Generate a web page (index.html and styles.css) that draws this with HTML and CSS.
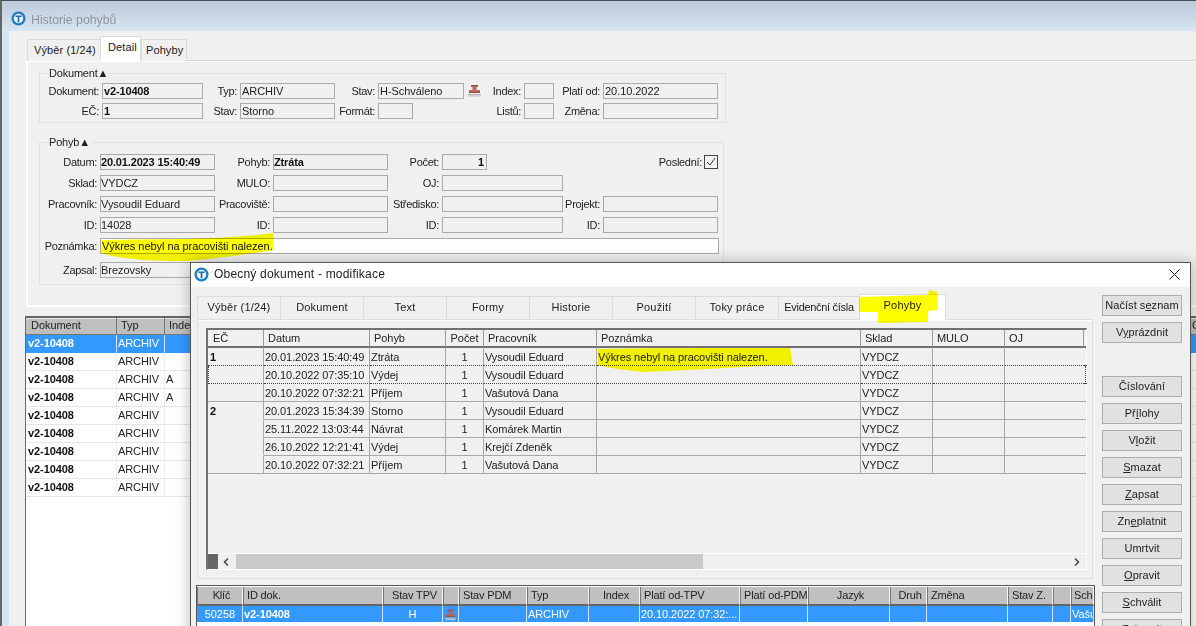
FILE: index.html
```html
<!DOCTYPE html>
<html lang="cs">
<head>
<meta charset="utf-8">
<title>Historie pohybů</title>
<link rel="stylesheet" href="styles.css">
</head>
<body>
<svg class="defs" width="0" height="0" aria-hidden="true">
  <symbol id="logo" viewBox="0 0 16 16">
    <circle cx="8" cy="8" r="7.500" fill="#1c7fc6"/>
    <circle cx="8" cy="8" r="5" fill="#eef5fb"/>
    <path d="M4.800 4.800h6.400v1.700H8.900V12H7.100V6.500H4.800z" fill="#1a6fb0"/>
  </symbol>
  <symbol id="stamp" viewBox="0 0 15 15">
    <path d="M4 2h7v2h-1.500v3H13v3H2V7h3.500V4H4z" fill="#b8675c"/>
    <path d="M4 2h7v1H4zM2 9h11v1H2z" fill="#8d4a40"/>
    <path d="M1 11h13v1.500H1z" fill="#b5b5b5"/>
    <path d="M2 13h11v1H2z" fill="#d8d8d8"/>
  </symbol>
</svg>

<main class="desktop">

  <section class="window history">
    <header class="history-title">
      <svg class="logo"><use href="#logo"/></svg>
      <span class="history-name">Historie pohybů</span>
    </header>
    <div class="history-body">
      <nav class="tabs">
        <span class="tab">Výběr (1/24)</span>
        <span class="tab tab-on">Detail</span>
        <span class="tab tab-last">Pohyby</span>
      </nav>
      <div class="pane">
        <section class="group group-doc">
          <h3 class="legend">Dokument▲</h3>
          <div class="form form-doc">
            <label>Dokument:</label><output class="strong">v2-10408</output>
            <label>Typ:</label><output>ARCHIV</output>
            <label>Stav:</label><output>H-Schváleno</output>
            <label class="with-icon"><svg class="stamp"><use href="#stamp"/></svg><span>Index:</span></label><output></output>
            <label>Platí od:</label><output>20.10.2022</output>

            <label>EČ:</label><output class="strong">1</output>
            <label>Stav:</label><output>Storno</output>
            <label>Formát:</label><output class="w35"></output>
            <label>Listů:</label><output></output>
            <label>Změna:</label><output></output>
          </div>
        </section>

        <section class="group group-move">
          <h3 class="legend">Pohyb▲</h3>
          <div class="form form-move">
            <label>Datum:</label><output class="strong">20.01.2023 15:40:49</output>
            <label>Pohyb:</label><output class="strong">Ztráta</output>
            <label>Počet:</label><output class="strong num w45">1</output>
            <label class="last-flag">Poslední:<svg class="check" viewBox="0 0 14 14"><rect x=".5" y=".5" width="13" height="13" fill="#f4f4f4" stroke="#444"/><path d="M3 7l3 3 5-7" fill="none" stroke="#333"/></svg></label>

            <label>Sklad:</label><output>VYDCZ</output>
            <label>MULO:</label><output></output>
            <label>OJ:</label><output></output>
            <span class="skip"></span>

            <label>Pracovník:</label><output>Vysoudil Eduard</output>
            <label>Pracoviště:</label><output></output>
            <label>Středisko:</label><output></output>
            <label>Projekt:</label><output></output>

            <label>ID:</label><output>14028</output>
            <label>ID:</label><output></output>
            <label>ID:</label><output></output>
            <label>ID:</label><output></output>

            <label>Poznámka:</label><output class="note">Výkres nebyl na pracovišti nalezen.</output>

            <label class="after-note">Zapsal:</label><output class="after-note">Brezovsky</output>
          </div>
        </section>
      </div>

      <div class="list">
        <table class="grid grid-history">
          <colgroup><col class="h1"><col class="h2"><col class="h3"><col class="h4"><col class="h5"></colgroup>
          <thead><tr><th>Dokument</th><th>Typ</th><th>Index</th><th></th><th>C</th></tr></thead>
          <tbody>
            <tr class="sel"><td class="b">v2-10408</td><td>ARCHIV</td><td></td><td></td><td></td></tr>
            <tr><td class="b">v2-10408</td><td>ARCHIV</td><td></td><td></td><td></td></tr>
            <tr><td class="b">v2-10408</td><td>ARCHIV</td><td>A</td><td></td><td></td></tr>
            <tr><td class="b">v2-10408</td><td>ARCHIV</td><td>A</td><td></td><td></td></tr>
            <tr><td class="b">v2-10408</td><td>ARCHIV</td><td></td><td></td><td></td></tr>
            <tr><td class="b">v2-10408</td><td>ARCHIV</td><td></td><td></td><td></td></tr>
            <tr><td class="b">v2-10408</td><td>ARCHIV</td><td></td><td></td><td></td></tr>
            <tr><td class="b">v2-10408</td><td>ARCHIV</td><td></td><td></td><td></td></tr>
            <tr><td class="b">v2-10408</td><td>ARCHIV</td><td></td><td></td><td></td></tr>
          </tbody>
        </table>
      </div>
    </div>
  </section>

  <svg class="marker marker-a" viewBox="0 0 176 30"><path d="M1 8C60 7 120 8 173 1L174 18C150 22 120 26 87 29C50 30 15 26 1 21Z"/></svg>

  <section class="window dialog">
    <header class="dialog-title">
      <svg class="logo"><use href="#logo"/></svg>
      <span class="dialog-name">Obecný dokument - modifikace</span>
      <svg class="close" viewBox="0 0 11 11"><path d="M.5.5l10 10M10.500.5l-10 10" fill="none" stroke="#222"/></svg>
    </header>
    <div class="dialog-body">
      <div class="dialog-main">
        <nav class="tabs tabs-wide">
          <span class="tab">Výběr (1/24)</span>
          <span class="tab">Dokument</span>
          <span class="tab">Text</span>
          <span class="tab">Formy</span>
          <span class="tab">Historie</span>
          <span class="tab">Použití</span>
          <span class="tab">Toky práce</span>
          <span class="tab tab-narrow">Evidenční čísla</span>
          <span class="tab tab-on">Pohyby</span>
        </nav>
        <div class="pane-wide">
          <div class="moves">
            <table class="grid grid-moves">
              <colgroup><col class="m1"><col class="m2"><col class="m3"><col class="m4"><col class="m5"><col class="m6"><col class="m7"><col class="m8"><col class="m9"><col class="m10"></colgroup>
              <thead><tr><th>EČ</th><th>Datum</th><th>Pohyb</th><th class="ctr">Počet</th><th>Pracovník</th><th>Poznámka</th><th>Sklad</th><th>MULO</th><th>OJ</th><th></th></tr></thead>
              <tbody>
                <tr><td class="b noline">1</td><td>20.01.2023 15:40:49</td><td>Ztráta</td><td class="ctr">1</td><td>Vysoudil Eduard</td><td>Výkres nebyl na pracovišti nalezen.</td><td>VYDCZ</td><td></td><td></td><td></td></tr>
                <tr class="focus"><td class="noline"></td><td>20.10.2022 07:35:10</td><td>Výdej</td><td class="ctr">1</td><td>Vysoudil Eduard</td><td></td><td>VYDCZ</td><td></td><td></td><td></td></tr>
                <tr><td></td><td>20.10.2022 07:32:21</td><td>Příjem</td><td class="ctr">1</td><td>Vašutová Dana</td><td></td><td>VYDCZ</td><td></td><td></td><td></td></tr>
                <tr><td class="b noline">2</td><td>20.01.2023 15:34:39</td><td>Storno</td><td class="ctr">1</td><td>Vysoudil Eduard</td><td></td><td>VYDCZ</td><td></td><td></td><td></td></tr>
                <tr><td class="noline"></td><td>25.11.2022 13:03:44</td><td>Návrat</td><td class="ctr">1</td><td>Komárek Martin</td><td></td><td>VYDCZ</td><td></td><td></td><td></td></tr>
                <tr><td class="noline"></td><td>26.10.2022 12:21:41</td><td>Výdej</td><td class="ctr">1</td><td>Krejčí Zdeněk</td><td></td><td>VYDCZ</td><td></td><td></td><td></td></tr>
                <tr><td></td><td>20.10.2022 07:32:21</td><td>Příjem</td><td class="ctr">1</td><td>Vašutová Dana</td><td></td><td>VYDCZ</td><td></td><td></td><td></td></tr>
              </tbody>
            </table>
            <div class="hscroll">
              <span class="corner"></span>
              <svg class="arrow" viewBox="0 0 6 8"><path d="M5 .5L1.500 4 5 7.500" fill="none" stroke="#444" stroke-width="1.500"/></svg>
              <span class="thumb"></span>
              <svg class="arrow arrow-r" viewBox="0 0 6 8"><path d="M1 .5L4.500 4 1 7.500" fill="none" stroke="#444" stroke-width="1.500"/></svg>
            </div>
          </div>
        </div>
        <div class="docs">
          <table class="grid grid-docs">
            <colgroup><col class="d1"><col class="d2"><col class="d3"><col class="d4"><col class="d5"><col class="d6"><col class="d7"><col class="d8"><col class="d9"><col class="d10"><col class="d11"><col class="d12"><col class="d13"><col class="d14"><col class="d15"></colgroup>
            <thead><tr><th class="ctr">Klíč</th><th>ID dok.</th><th class="ctr">Stav TPV</th><th></th><th>Stav PDM</th><th>Typ</th><th class="ctr">Index</th><th>Platí od-TPV</th><th>Platí od-PDM</th><th class="ctr">Jazyk</th><th class="ctr">Druh</th><th>Změna</th><th>Stav Z.</th><th></th><th>Sch</th></tr></thead>
            <tbody>
              <tr class="sel"><td class="rgt">50258</td><td class="b">v2-10408</td><td class="ctr">H</td><td class="ctr"><svg class="stamp"><use href="#stamp"/></svg></td><td></td><td>ARCHIV</td><td></td><td>20.10.2022 07:32:...</td><td></td><td></td><td></td><td></td><td></td><td></td><td>Vašu</td></tr>
            </tbody>
          </table>
        </div>
      </div>
      <aside class="actions">
        <button>Načíst s<u>e</u>znam</button>
        <button>V<u>y</u>prázdnit</button>
        <button class="gap">Číslování</button>
        <button>Př<u>í</u>lohy</button>
        <button>V<u>l</u>ožit</button>
        <button><u>S</u>mazat</button>
        <button><u>Z</u>apsat</button>
        <button>Zn<u>e</u>platnit</button>
        <button>Umrtvit</button>
        <button><u>O</u>pravit</button>
        <button><u>S</u>chválit</button>
        <button><u>Z</u>obrazit</button>
      </aside>
    </div>
  </section>

  <svg class="marker marker-b" viewBox="0 0 197 25"><path d="M1 1C50 0 130 0 193 0L196 17C150 18 100 22 45 24C30 22 10 20 1 17Z"/></svg>
  <svg class="marker marker-c" viewBox="0 0 84 34"><path d="M1 7L70 5L71 0L79 2L79 20L70 21L70 32L20 33L20 22L1 22Z"/></svg>
</main>
</body>
</html>
```

FILE: styles.css
```css
* { box-sizing: border-box; }
html, body { margin: 0; padding: 0; }
body {
  width: 1196px;
  height: 626px;
  overflow: hidden;
  font: 11px/1 "Liberation Sans", Arial, sans-serif;
  color: #222;
  background: #f0f0f0;
}
.defs { position: absolute; }
.desktop { position: relative; width: 1196px; height: 626px; overflow: hidden; }
.window { position: absolute; }

/* background window */
.history {
  left: 0; top: 0; width: 1196px; height: 626px;
  border-top: 1px solid #4a5058;
  border-left: 2px solid #666;
  background: #d8e5f1;
}
.history-title {
  height: 30px;
  padding: 10px 0 0 9px;
  display: flex;
  align-items: flex-start;
  gap: 5px;
  font-size: 12.3px;
  color: #8f959b;
  background: linear-gradient(#bccbdb, #d8e5f1);
}
.history-name { margin-top: 3px; }
.logo { width: 15px; height: 15px; flex: none; }
.history-body {
  margin-left: 7px;
  height: 595px;
  background: #f0f0f0;
  padding-top: 5px;
}
.tabs { display: flex; align-items: flex-end; height: 25px; margin-bottom: -1px; padding-left: 18px; position: relative; z-index: 1; }
.tab {
  height: 22px;
  padding: 5px 5px 0;
  border: 1px solid #dcdcdc;
  border-bottom: 0;
  border-right: 0;
  background: #f0f0f0;
  letter-spacing: .1px;
  white-space: nowrap;
}
.tab-on {
  height: 25px;
  padding-top: 5px;
  background: #fff;
  border-right: 1px solid #dcdcdc;
}
.tab-last { border-right: 1px solid #dcdcdc; }
.history .tab:nth-child(1) { width: 73px; padding-left: 6px; }
.history .tab:nth-child(2) { width: 41px; padding-left: 7px; }
.history .tab:nth-child(3) { width: 46px; padding-left: 4px; }
.pane {
  margin-left: 17px;
  height: 247px;
  border-top: 1px solid #d8d8d8;
  border-left: 2px solid #fff;
  border-bottom: 2px solid #fff;
  box-shadow: inset 0 1px 0 #fff;
  padding: 12px 0 0 11px;
}
.group {
  border: 1px solid #e0e0e0;
  position: relative;
}
.legend {
  margin: -7px 0 0 7px;
  padding: 0 2px;
  width: fit-content;
  height: 13px;
  font: inherit;
  line-height: 13px;
  background: #f0f0f0;
  letter-spacing: -.2px;
}
.group-doc { width: 687px; height: 50px; }
.group-move { width: 685px; height: 143px; margin-top: 19px; }
.form { display: grid; align-items: start; }
.form label {
  height: 16px;
  line-height: 16px;
  text-align: right;
  padding-right: 3px;
  white-space: nowrap;
  letter-spacing: -.3px;
}
.form output {
  height: 16px;
  line-height: 14px;
  padding-left: 1px;
  border: 1px solid #aaa;
  white-space: nowrap;
  overflow: hidden;
  letter-spacing: -.05px;
}
.form-doc {
  grid-template-columns: 62px 101px 37px 95px 43px 86px 60px 30px 49px 115px;
  grid-auto-rows: 16px;
  row-gap: 4px;
  margin-top: 3px;
}
.form-move {
  grid-template-columns: 60px 115px 58px 115px 54px 121px 40px 115px;
  grid-auto-rows: 16px;
  row-gap: 5px;
  margin-top: 5px;
}
.form-move output { padding-left: 0; }
.form .strong { font-weight: 700; color: #111; letter-spacing: -.15px; }
.form .num { text-align: right; padding-right: 2px; }
.w35 { width: 35px; }
.w45 { width: 45px; }
.form .with-icon { display: flex; justify-content: space-between; padding-left: 3px; }
.stamp { width: 15px; height: 15px; display: block; }
.form .last-flag {
  grid-column: span 2;
  display: flex;
  justify-content: flex-end;
  align-items: center;
  gap: 2px;
  padding-right: 0;
}
.check { width: 14px; height: 14px; flex: none; }
.skip { grid-column: span 2; }
.form .note { grid-column: 2 / -1; width: 619px; background: #fff; color: #111; padding-left: 1px; }
.form .after-note { margin-top: 3px; }

/* grids */
.grid { border-collapse: separate; border-spacing: 0; table-layout: fixed; }
.grid th {
  font-weight: 400;
  text-align: left;
  padding: 0 4px;
  overflow: hidden;
  white-space: nowrap;
  letter-spacing: -.05px;
}
.grid td {
  padding: 0 1px;
  overflow: hidden;
  white-space: nowrap;
  letter-spacing: -.08px;
}
.grid .b { font-weight: 700; color: #111; }
.grid .ctr { text-align: center; }
.grid .rgt { text-align: right; padding-right: 7px; }

.list {
  margin: 9px 0 0 16px;
  border-top: 2px solid #666;
  border-left: 1px solid #666;
  height: 312px;
  background: #fff;
  overflow: hidden;
}
.grid-history { width: 1180px; }
.h1 { width: 91px; }
.h2 { width: 48px; }
.h3 { width: 40px; }
.h4 { width: 985px; }
.h5 { width: 16px; }
.grid-history th {
  height: 17px;
  padding-bottom: 2px;
  background: #bfbfbf;
  border-right: 1px solid #777;
  border-bottom: 1px solid #777;
  box-shadow: inset 0 1px 0 #e6e6e6;
}
.grid-history th:first-child { padding-left: 5px; }
.grid-history th:last-child { padding-left: 2px; }
.grid-history td {
  height: 18px;
  border-right: 1px solid #efefef;
  border-bottom: 1px solid #e6e6e6;
}
.grid-history td:first-child { padding-left: 2px; }
.grid .sel td { background: #3399ff; color: #fff; border-right-color: #cfe6ff; border-bottom-color: #3399ff; }

/* marker strokes */
.marker {
  position: absolute;
  fill: #ffff00;
  mix-blend-mode: multiply;
  pointer-events: none;
}
.marker-a { left: 100px; top: 232px; width: 176px; height: 30px; }
.marker-b { left: 597px; top: 348px; width: 197px; height: 25px; z-index: 3; }
.marker-c { left: 858px; top: 290px; width: 84px; height: 34px; z-index: 3; }

/* dialog */
.dialog {
  left: 190px; top: 262px; width: 1001px; height: 380px;
  border: 1px solid #555;
  border-bottom: 0;
  background: #f0f0f0;
  box-shadow: 0 0 14px rgba(0,0,0,.28);
  z-index: 2;
}
.dialog-title {
  height: 24px;
  background: #fff;
  display: flex;
  align-items: center;
  padding: 0 10px 2px 3px;
  gap: 5px;
}
.dialog-name { flex: 1; font-size: 12px; letter-spacing: .2px; color: #222; }
.close { width: 11px; height: 11px; }
.dialog-body { display: flex; }
.dialog-main { width: 911px; padding: 8px 0 0 5px; }
.tabs-wide { height: 24px; margin-bottom: 0; padding-left: 1px; }
.tabs-wide .tab {
  width: 83px;
  text-align: center;
  padding: 5px 0 0;
  height: 23px;
  letter-spacing: .2px;
}
.tabs-wide .tab-narrow { width: 81px; letter-spacing: -.3px; }
.tabs-wide .tab-on { width: 87px; height: 26px; padding-top: 5px; margin-bottom: -1px; }
.pane-wide {
  width: 896px;
  height: 260px;
  margin-left: 1px;
  border: 1px solid #fff;
  border-top: 1px solid #d8d8d8;
  outline: 1px solid #dedede;
  outline-offset: -1px;
  padding: 8px 0 0 8px;
  box-shadow: inset 0 1px 0 #fff;
}
.moves {
  width: 881px;
  height: 242px;
  border-top: 2px solid #707070;
  border-left: 2px solid #707070;
  border-right: 1px solid #fff;
  border-bottom: 1px solid #fff;
  display: flex;
  flex-direction: column;
  justify-content: space-between;
}
.grid-moves { width: 878px; }
.m1 { width: 56px; } .m2 { width: 106px; } .m3 { width: 76px; } .m4 { width: 38px; } .m5 { width: 113px; }
.m6 { width: 264px; } .m7 { width: 72px; } .m8 { width: 72px; } .m9 { width: 79px; } .m10 { width: 2px; }
.grid-moves th {
  height: 18px;
  background: #f0f0f0;
  border-right: 1px solid #999;
  border-bottom: 2px solid #707070;
}
.grid-moves th:last-child { border-right: 0; padding: 0; }
.grid-moves td {
  height: 18px;
  padding-top: 1px;
  border-right: 1px solid #a8a8a8;
  border-bottom: 1px solid #a8a8a8;
}
.grid-moves td:nth-child(n+9) { border-right: 0; padding: 0; }
.grid-moves th:first-child { padding-left: 5px; }
.grid-moves td:first-child { padding-left: 2px; }
.grid-moves .noline { border-bottom-color: transparent; }
.grid-moves tr:first-child td { border-bottom: 1px dotted #444; }
.grid-moves .focus td { border-bottom: 1px dotted #444; }
.grid-moves .focus td:first-child { border-left: 1px dotted #444; }
.grid-moves .focus td:last-child { border-right: 1px dotted #444; }
.hscroll {
  height: 16px;
  display: flex;
  align-items: center;
  border-top: 1px solid #fff;
}
.corner { width: 10px; height: 15px; background: #666; }
.arrow { width: 6px; height: 8px; margin-left: 5px; flex: none; }
.thumb { width: 467px; height: 15px; margin-left: 7px; background: #c9c9c9; }
.arrow-r { margin-left: auto; margin-right: 6px; }
.docs {
  margin-top: 6px;
  width: 899px;
  height: 60px;
  border-top: 1px solid #555;
  border-left: 1px solid #555;
  border-right: 1px solid #555;
  padding-top: 1px;
  background: #fff;
  overflow: hidden;
}
.grid-docs { width: 897px; }
.d1 { width: 46px; } .d2 { width: 140px; } .d3 { width: 60px; } .d4 { width: 16px; } .d5 { width: 68px; }
.d6 { width: 62px; } .d7 { width: 51px; } .d8 { width: 100px; } .d9 { width: 68px; } .d10 { width: 82px; }
.d11 { width: 37px; } .d12 { width: 81px; } .d13 { width: 45px; } .d14 { width: 18px; } .d15 { width: 23px; }
.grid-docs th {
  height: 19px;
  padding-right: 0;
  background: #c0c0c0;
  border-right: 1px solid #f4f4f4;
  border-bottom: 2px solid #666;
  box-shadow: inset 1px 0 0 #777;
  letter-spacing: -.15px;
}
.grid-docs th:last-child { padding-left: 3px; }
.grid-docs td {
  height: 16px;
  border-right: 1px solid #cfe6ff;
}
.grid-docs .stamp { width: 13px; height: 13px; margin: 0 auto; }
.actions {
  width: 80px;
  padding-top: 8px;
  display: flex;
  flex-direction: column;
  gap: 6px;
}
.actions button {
  width: 80px;
  height: 21px;
  flex: none;
  padding: 0;
  font: inherit;
  letter-spacing: .05px;
  color: #222;
  background: #e1e1e1;
  border: 1px solid #adadad;
}
.actions .gap { margin-top: 27px; }
```
